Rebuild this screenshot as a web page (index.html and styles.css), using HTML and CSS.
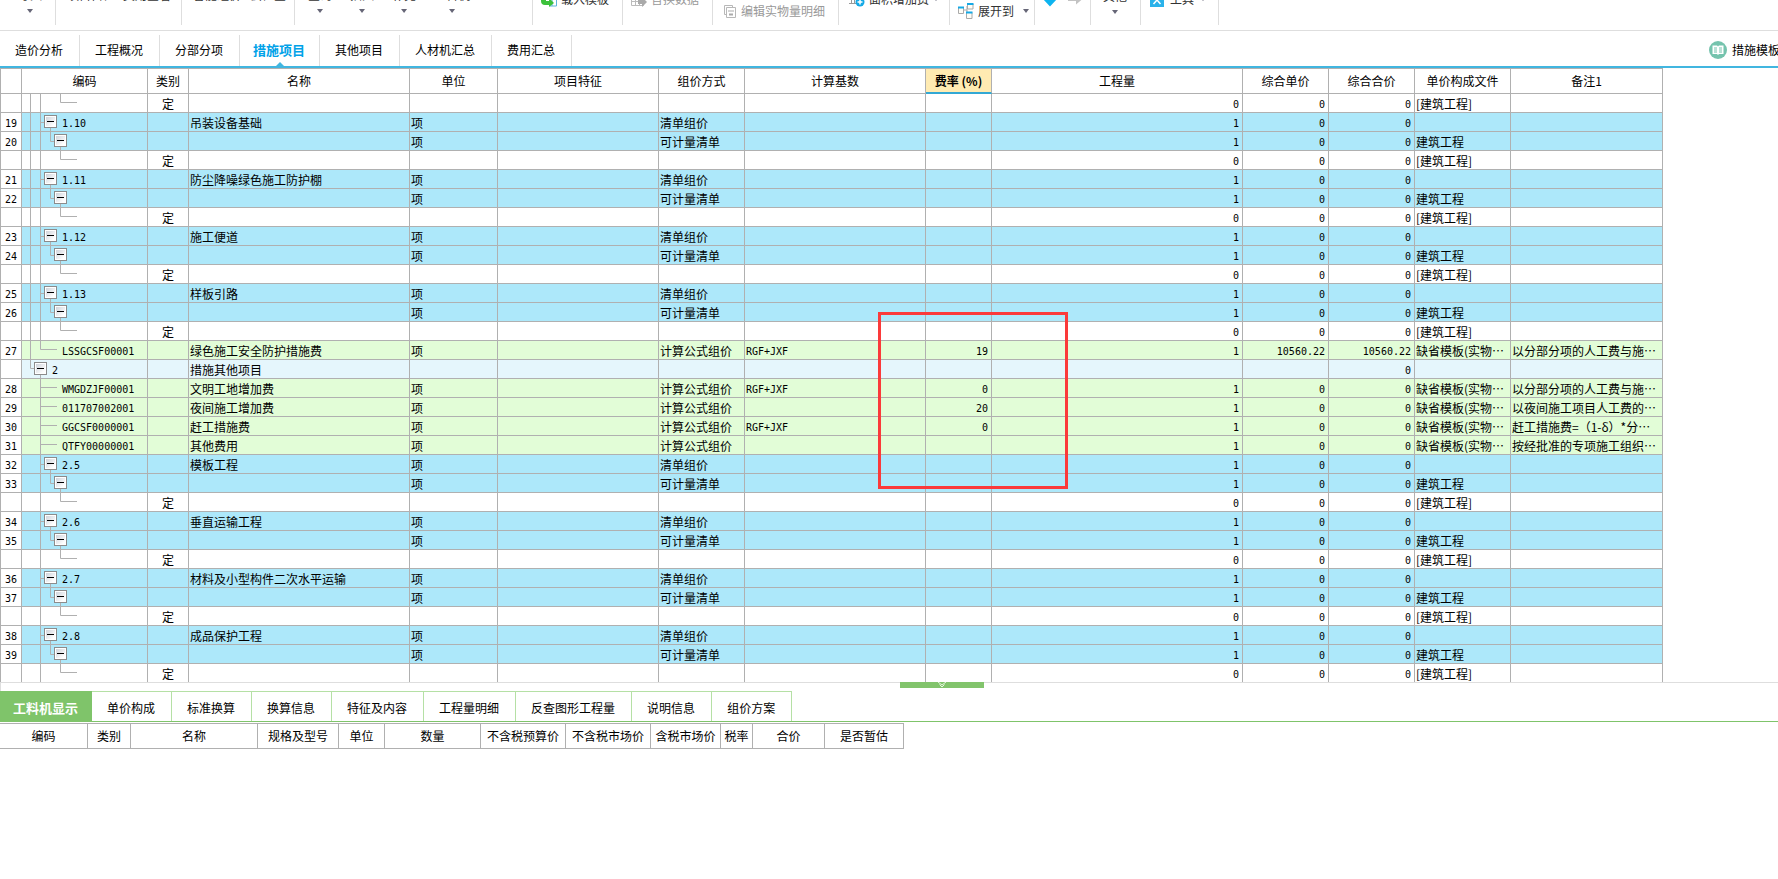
FILE: index.html
```html
<!DOCTYPE html>
<html lang="zh-CN">
<head>
<meta charset="utf-8">
<title>措施项目</title>
<link rel="stylesheet" href="styles.css">
</head>
<body>
<header class="toolbar">
  <div class="group g-import"><button class="big">导入<i class="caret"></i></button></div>
  <div class="group g-check"><button class="big">项目自检</button><button class="big">费用查看</button></div>
  <div class="group g-smart"><button class="big">智能组价</button><button class="big">云检查</button></div>
  <div class="group g-edit"><button class="big">查询<i class="caret"></i></button><button class="big">插入<i class="caret"></i></button><button class="big">补充<i class="caret"></i></button><button class="big">工料机<i class="caret"></i></button></div>
  <div class="group g-small"><button class="small"><svg width="16" height="16" viewBox="0 0 16 16"><path d="M7 2h8.500v13H9M7 8.500h8M11 4v11" fill="none" stroke="#5fb4dc"/><path d="M0 5h5v5h3V7l5 5-5 4v-2H4Q0 14 0 10z" fill="#3cc13b"/></svg>载入模板</button></div>
  <div class="group g-small"><button class="small dim"><svg width="16" height="16" viewBox="0 0 16 16"><path d="M.500 2h12v12.500H.500zM.500 6.500h9M.500 10.500h9M4.500 2v12M8.500 2v12" fill="none" stroke="#bbb"/><path d="M7 9h4V6l5 5-5 5v-3H7z" fill="#aaa"/></svg>替换数据</button></div>
  <div class="group g-detail"><button class="small low dim"><svg width="12" height="13" viewBox="0 0 12 13"><path d="M2 9.500H.500v-9h8V2M2.500 2.500h9v10h-9z" fill="none" stroke="#b8b8b8"/><path d="M4.500 6h1M6.500 6h1M8.500 6h1M5 9.500h4" stroke="#aaa" stroke-width="2"/></svg>编辑实物量明细</button></div>
  <div class="group g-area"><button class="small"><svg width="16" height="16" viewBox="0 0 16 16"><path d="M0 12.500h9M2.500 8v4M5.500 8v4" stroke="#999"/><circle cx="11" cy="11" r="4.500" fill="#14a9e6"/><path d="M8.500 11h5M11 8.500v5" stroke="#fff" stroke-width="1.500"/></svg>面积增加费<i class="caret"></i></button></div>
  <div class="group g-expand"><button class="small low"><svg width="16" height="16" viewBox="0 0 16 16"><path d="M6 7h3V3M9 7v5" fill="none" stroke="#aaa"/><path d="M.500 4.500h5v6h-5zM9.500 1h5.500v5H9.500zM8.500 9.500H14v6H8.500z" fill="#fffdf6" stroke="#aaa"/><path d="M0 4.500h6M9 1h6.500M8 9.500h6.500" stroke="#14a9e6" stroke-width="2"/></svg>展开到<i class="caret"></i></button></div>
  <div class="group g-arrows"><button class="small" aria-label="下移"><svg width="16" height="16" viewBox="0 0 16 16"><path d="M4 2h7v6h4l-7 7.500L1 8h3z" fill="#0db4f0"/></svg></button><button class="small" aria-label="右移"><svg width="16" height="16" viewBox="0 0 16 16"><path d="M1 7h8V2.500L15 8.500l-6 5V10H1z" fill="#c3c3c3"/></svg></button></div>
  <div class="group g-other"><button class="big">其他<i class="caret"></i></button></div>
  <div class="group g-tools"><button class="small"><svg width="14" height="16" viewBox="0 0 14 16"><path d="M0 0h14v16H0z" fill="#2ab2ea"/><path d="M3.500 5l7 8M10.500 5l-7 8" stroke="#fff" stroke-width="1.500"/></svg>工具<i class="caret"></i></button></div>
</header>

<nav class="tabs">
  <button>造价分析</button><button>工程概况</button><button>分部分项</button><button class="active">措施项目</button><button>其他项目</button><button>人材机汇总</button><button>费用汇总</button>
  <a class="template" href="#"><svg width="18" height="18" viewBox="0 0 18 18"><circle cx="9" cy="9" r="9" fill="#75c3ad"/><path d="M3.500 4.500H8l1 1 1-1h4.500v8.500H10l-1 1-1-1H3.500z" fill="#fff"/><path d="M5 7h3M5 9h3M5 11h3M10 7h3M10 9h3M10 11h3" stroke="#75c3ad"/></svg>措施模板</a>
</nav>

<main class="grid">
  <table class="items">
    <colgroup><col class="w-no"><col class="w-code"><col class="w-type"><col class="w-name"><col class="w-unit"><col class="w-feat"><col class="w-way"><col class="w-base"><col class="w-rate"><col class="w-qty"><col class="w-price"><col class="w-price"><col class="w-file"><col class="w-note"></colgroup>
    <thead><tr><th></th><th>编码</th><th>类别</th><th>名称</th><th>单位</th><th>项目特征</th><th>组价方式</th><th>计算基数</th><th class="picked">费率 (%)</th><th>工程量</th><th>综合单价</th><th>综合合价</th><th>单价构成文件</th><th>备注1</th></tr></thead>
    <tbody id="rows"></tbody>
  </table>
  <div class="highlight"></div>
</main>

<div class="splitter"><button class="handle" aria-label="折叠"><svg width="10" height="6" viewBox="0 0 10 6"><path d="M1 0l4 3 4-3M2.500 2.500L5 5l2.500-2.500" fill="none" stroke="#e6f5df"/></svg></button></div>

<nav class="subtabs">
  <button class="active">工料机显示</button><button>单价构成</button><button>标准换算</button><button>换算信息</button><button>特征及内容</button><button>工程量明细</button><button>反查图形工程量</button><button>说明信息</button><button>组价方案</button>
</nav>

<section class="detail">
  <table class="resources">
    <colgroup><col class="r-code"><col class="r-type"><col class="r-name"><col class="r-spec"><col class="r-unit"><col class="r-qty"><col class="r-price"><col class="r-price"><col class="r-market"><col class="r-tax"><col class="r-total"><col class="r-est"></colgroup>
    <thead><tr><th>编码</th><th>类别</th><th>名称</th><th>规格及型号</th><th>单位</th><th>数量</th><th>不含税预算价</th><th>不含税市场价</th><th>含税市场价</th><th>税率</th><th>合价</th><th>是否暂估</th></tr></thead>
  </table>
</section>
<script src="rows.js"></script>
</body>
</html>
```
FILE: rows.js
```js
// Each bill item expands to three rows: the item, its measured list, and a quota row.
const bill = (no, code, name, g) => [
  { no, code, name, tree: 'item', g, tone: 'blue', unit: '项', way: '清单组价', qty: 1, price: 0, total: 0 },
  { no: no + 1, tree: 'list', g, tone: 'blue', unit: '项', way: '可计量清单', qty: 1, price: 0, total: 0, file: '建筑工程' },
  quota(g)
];
const quota = g => ({ tree: 'quota', g, type: '定', qty: 0, price: 0, total: 0, file: '[建筑工程]' });
const fee = (no, code, name, base, rate, note, price = 0, tree = 'fee', g = false) =>
  ({ no, code, name, tree, g, tone: 'green', unit: '项', way: '计算公式组价', base, rate, qty: 1, price, total: price, file: '缺省模板(实物⋯', note });

const data = [
  quota(true),
  ...bill(19, '1.10', '吊装设备基础', true),
  ...bill(21, '1.11', '防尘降噪绿色施工防护棚', true),
  ...bill(23, '1.12', '施工便道', true),
  ...bill(25, '1.13', '样板引路', true),
  fee(27, 'LSSGCSF00001', '绿色施工安全防护措施费', 'RGF+JXF', 19, '以分部分项的人工费与施⋯', '10560.22', 'feeEnd', true),
  { code: '2', name: '措施其他项目', tree: 'section', tone: 'pale', total: 0 },
  fee(28, 'WMGDZJF00001', '文明工地增加费', 'RGF+JXF', 0, '以分部分项的人工费与施⋯'),
  fee(29, '011707002001', '夜间施工增加费', '', 20, '以夜间施工项目人工费的⋯'),
  fee(30, 'GGCSF0000001', '赶工措施费', 'RGF+JXF', 0, '赶工措施费=（1-δ）*分⋯'),
  fee(31, 'QTFY00000001', '其他费用', '', '', '按经批准的专项施工组织⋯'),
  ...bill(32, '2.5', '模板工程'),
  ...bill(34, '2.6', '垂直运输工程'),
  ...bill(36, '2.7', '材料及小型构件二次水平运输'),
  ...bill(38, '2.8', '成品保护工程')
];

// Connector lines: [svg width, path, has toggle]
const trees = {
  item: [22, 'M18.5 0v18M18 9.5h4', true],
  list: [32, 'M18.5 0v18M28.5 0v9.5h4', true],
  quota: [55, 'M18.5 0v18M38.5 0v8.5h17', false],
  fee: [35, 'M18.5 0v18M18 8.5h17', false],
  feeEnd: [35, 'M18.5 0v8.5h17', false],
  section: [12, 'M8.5 0v8.5h4', true]
};
const toggle = '<span class="node"><button aria-label="折叠"></button></span>';

const codeCell = r => {
  const [w, path, open] = trees[r.tree];
  return `<div class="tree"><svg width="${w}" height="18"><path d="${path}${r.g ? 'M8.5 0v18' : ''}"/></svg>${open ? toggle : ''}<span class="code">${r.code ?? ''}</span></div>`;
};

document.getElementById('rows').innerHTML = data.map(r => {
  const cell = (key, cls) => `<td class="${cls}">${r[key] ?? ''}</td>`;
  return `<tr class="${r.tone ?? ''}">` + cell('no', 'no') + `<td class="flush">${codeCell(r)}</td>` +
    cell('type', 'center') + cell('name', '') + cell('unit', '') + cell('feat', '') + cell('way', '') +
    cell('base', 'mono') + cell('rate', 'num') + cell('qty', 'num') + cell('price', 'num') +
    cell('total', 'num') + cell('file', '') + cell('note', '') + '</tr>';
}).join('');
```
FILE: styles.css
```css
* { box-sizing: border-box; }
body {
  margin: 0;
  min-height: 100vh;
  overflow: hidden;
  background: #fff;
  color: #000;
  font: 12px/16px "Noto Sans CJK SC", sans-serif;
}
button { margin: 0; padding: 0; border: 0; background: none; color: inherit; font: inherit; white-space: nowrap; }
svg { display: block; flex: none; }

/* Toolbar */
.toolbar { display: flex; height: 31px; overflow: hidden; border-bottom: 1px solid #dedede; color: #333; }
.group { display: flex; flex: none; align-items: flex-start; height: 25px; border-right: 1px solid #dedede; }
.big { display: flex; flex-direction: column; align-items: center; gap: 6px; margin-top: -13px; }
.g-other .big { margin-top: -12px; }
.small { display: flex; align-items: center; gap: 4px; margin-top: -9px; }
.low { margin-top: 3px; }
.dim { color: #999; }
.caret { width: 6px; height: 4px; background: #667; clip-path: polygon(0 0, 100% 0, 50% 100%); }
.g-import { width: 56px; padding-left: 18px; }
.g-check { width: 126px; padding-left: 11px; gap: 8px; }
.g-smart { width: 113px; padding-left: 11px; gap: 9px; }
.g-edit { width: 238px; padding-left: 13px; gap: 18px; }
.g-small { width: 90px; padding-left: 8px; }
.g-detail { width: 126px; padding-left: 11px; }
.g-detail button { gap: 5px; }
.g-area { width: 111px; padding-left: 10px; }
.g-expand { width: 85px; padding-left: 8px; }
.g-expand .caret { margin-left: 5px; }
.g-arrows { width: 56px; padding-left: 7px; gap: 9px; }
.g-other { width: 50px; padding-left: 12px; }
.g-tools { width: 78px; padding-left: 9px; }
.g-tools button { gap: 6px; }

/* Page tabs */
.tabs { display: flex; align-items: flex-end; height: 37px; border-bottom: 2px solid #41b6e0; }
.tabs button { position: relative; height: 31px; padding: 0 16px 2px 15px; border-right: 1px solid #dedede; }
.tabs .active { padding: 0 14px 2px 13px; color: #00a2e8; font-size: 13px; font-weight: bold; }
.tabs .active::after {
  content: "";
  position: absolute;
  left: calc(50% - 4px);
  bottom: 0;
  border: 4px solid transparent;
  border-top: 0;
  border-bottom-color: #41b6e0;
}
.template { display: flex; align-items: center; gap: 5px; height: 31px; margin: 0 -2px 0 auto; padding-bottom: 2px; color: #000; text-decoration: none; white-space: nowrap; }

/* Shared table look */
table { table-layout: fixed; border-spacing: 0; border-top: 1px solid #b0b0b0; }
th, td { overflow: hidden; padding: 0; border: solid #b0b0b0; border-width: 0 1px 1px 0; white-space: nowrap; }
th { height: 25px; font-weight: normal; text-align: center; }

/* Bill items */
.grid { position: relative; overflow: hidden; }
.items { width: 1663px; border-left: 1px solid #b0b0b0; }
.w-no { width: 21px; }
.w-code { width: 126px; }
.w-type { width: 41px; }
.w-name { width: 221px; }
.w-unit { width: 88px; }
.w-feat { width: 161px; }
.w-way { width: 86px; }
.w-base { width: 181px; }
.w-rate { width: 66px; }
.w-qty { width: 251px; }
.w-price { width: 86px; }
.w-file { width: 96px; }
.w-note { width: 152px; }
.items .picked { border-bottom: 2px solid #33a8d4; background: #ffebb2; font-weight: bold; }
.items td { height: 19px; padding: 2px 0 0 1px; }
.items tbody tr:last-child td { height: 18px; border-bottom: 0; }
.items .flush { padding: 0; }
.items .center { padding-left: 0; text-align: center; }
.items .no, .mono, .num, .code { font-family: "DejaVu Sans Mono", "Noto Sans CJK SC", monospace; font-size: 10px; }
.items .no, .items .mono, .items .num { padding-top: 3px; line-height: 15px; }
.items .no { padding-left: 0; background: #fff; text-align: center; }
.items .num { padding-right: 3px; text-align: right; }
.blue { background: #ade8fa; }
.green { background: #e2fdd7; }
.pale { background: #e5f6fc; }

.tree { display: flex; height: 18px; }
.tree path { fill: none; stroke: #b0b0b0; }
.node { width: 13px; padding-top: 2px; background: linear-gradient(#b0b0b0, #b0b0b0) 6px 15px / 1px 3px no-repeat; }
.node button {
  display: block;
  width: 13px;
  height: 13px;
  border: 1px solid #8c8c8c;
  background: linear-gradient(#000, #000) 2px 5px / 7px 1px no-repeat, linear-gradient(135deg, #c9ced6, #fff 80%);
  box-shadow: inset 0 0 0 1px #fff;
}
.code { padding: 3px 0 0 5px; line-height: 15px; }

.highlight { position: absolute; left: 878px; top: 244px; width: 190px; height: 177px; border: 3px solid #fb3a3a; }

/* Splitter */
.splitter { height: 9px; border: solid #dedede; border-width: 1px 0 0 1px; }
.handle { display: flex; position: relative; justify-content: center; width: 84px; height: 6px; margin-top: -1px; margin-left: calc(50% + 10px); background: #82c46c; }

/* Detail pane */
.subtabs { display: flex; height: 31px; border-bottom: 1px solid #7fc46a; }
.subtabs button { padding: 2px 16px 0 15px; border: solid #b5e0a5; border-width: 1px 1px 0 0; }
.subtabs .active { padding: 2px 13px 0; border-color: #7fc46a; background: #7fc46a; color: #fff; font-size: 13px; font-weight: bold; }
.detail { padding-top: 1px; }
.resources { width: 904px; }
.r-code { width: 88px; }
.r-type { width: 43px; }
.r-name { width: 127px; }
.r-spec { width: 81px; }
.r-unit { width: 46px; }
.r-qty { width: 96px; }
.r-price { width: 85px; }
.r-market { width: 70px; }
.r-tax { width: 32px; }
.r-total { width: 72px; }
.r-est { width: 79px; }
```
